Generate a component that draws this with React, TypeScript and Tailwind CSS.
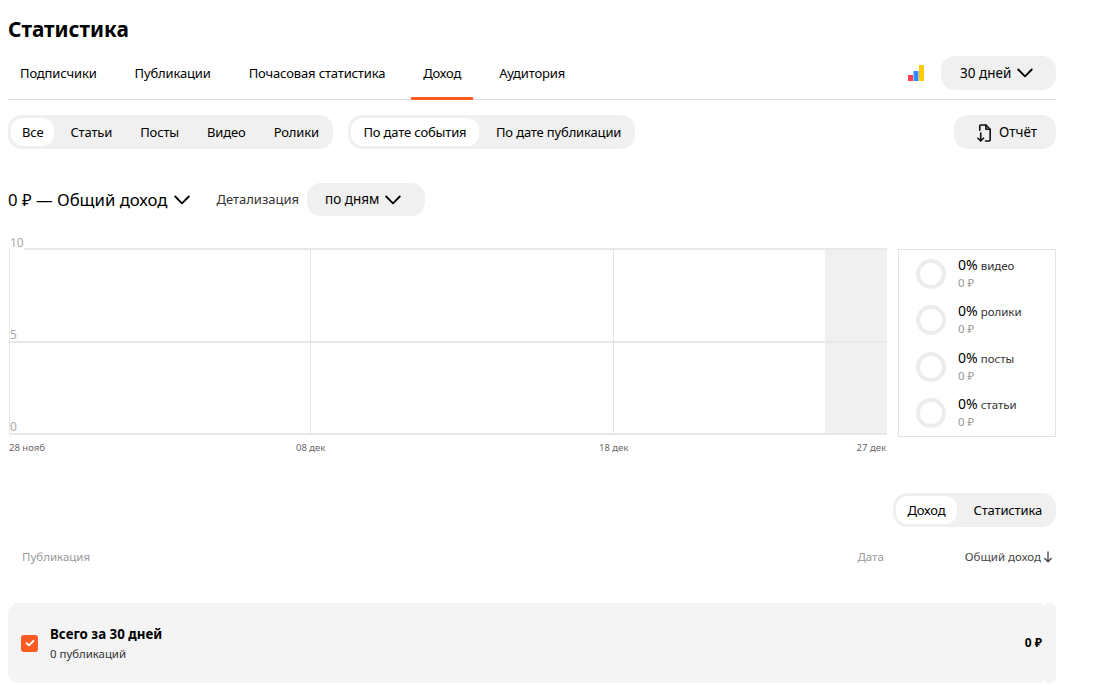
import React from "react";

const tabs = ["Подписчики", "Публикации", "Почасовая статистика", "Доход", "Аудитория"];
const kinds = ["Все", "Статьи", "Посты", "Видео", "Ролики"];
const dateModes = ["По дате события", "По дате публикации"];
const shares = ["видео", "ролики", "посты", "статьи"];

const Chevron = ({ className = "" }: { className?: string }) => (
  <svg viewBox="0 0 16 10" className={className} fill="none" stroke="currentColor" strokeWidth="1.8" strokeLinecap="round" strokeLinejoin="round">
    <path d="M1.2 1.5 8 8.4l6.8-6.9" />
  </svg>
);

const Segment = ({ items, active, pillClass }: { items: string[]; active: string; pillClass: string }) => (
  <div className="flex h-[34px] items-center rounded-[14px] bg-[#f0f0f0] pl-[3px]">
    {items.map((item) =>
      item === active ? (
        <div key={item} className={`flex h-[28px] items-center rounded-[12px] bg-white pt-px text-[13px] tracking-[-0.15px] text-black ${pillClass}`}>
          {item}
        </div>
      ) : (
        <div key={item} className="flex h-[28px] items-center px-[14px] pt-px text-[13px] tracking-[-0.15px] text-black">
          {item}
        </div>
      ),
    )}
  </div>
);

const App = () => {
  return (
    <div className="h-[685px] w-[1108px] overflow-hidden bg-white pl-2 font-['Noto_Sans','Open_Sans',sans-serif] text-black">
      <div className="w-[1048px]">
        {/* Header */}
        <h1 className="h-[56px] pt-[12px] text-[20.8px] leading-[34px] font-bold text-black">Статистика</h1>
        <div className="flex h-[44px] items-start justify-between border-b border-[#e0e0e0]">
          <div className="flex gap-[14px]">
            {tabs.map((tab) => (
              <div
                key={tab}
                className={`flex h-[44px] items-center border-b-[3px] px-3 pb-[5px] text-[13px] tracking-[-0.15px] ${tab === "Доход" ? "border-[#fc5a23]" : "border-transparent"}`}
              >
                {tab}
              </div>
            ))}
          </div>
          <div className="flex items-center">
            <svg viewBox="0 0 16 16" className="mr-[17px] h-4 w-4">
              <rect x="0" y="10" width="5" height="6" fill="#ff4050" />
              <rect x="5.5" y="6" width="5" height="10" fill="#2f8cff" />
              <rect x="11" y="0" width="5" height="16" fill="#ffcc00" />
            </svg>
            <div className="flex h-[34px] w-[115px] items-center gap-[6px] rounded-[14px] bg-[#f0f0f0] pl-[19px] text-[13.5px]">
              30 дней
              <Chevron className="h-[10px] w-4" />
            </div>
          </div>
        </div>

        {/* Filters */}
        <div className="mt-[15px] flex justify-between">
          <div className="flex gap-[15px]">
            <Segment items={kinds} active="Все" pillClass="mr-[2px] px-[11px]" />
            <Segment items={dateModes} active="По дате события" pillClass="mr-[3px] px-[12.5px]" />
          </div>
          <div className="flex h-[34px] w-[102px] items-center gap-[6px] rounded-[14px] bg-[#f0f0f0] pt-px pl-[22px] text-[13.5px]">
            <svg viewBox="0 0 18 20" className="h-5 w-[17px]" fill="none" stroke="#111" strokeWidth="1.7" strokeLinecap="round" strokeLinejoin="round">
              <path d="M4 7V2.5A1 1 0 0 1 5 1.5h5.5L15 6v11.5a1 1 0 0 1-1 1h-4" />
              <path d="M10.5 1.5V6H15" />
              <path d="M5 10v8.5M2 15.5l3 3 3-3" />
            </svg>
            Отчёт
          </div>
        </div>

        {/* Chart controls */}
        <div className="mt-[34px] flex h-[33px] items-center">
          <span className="text-[16.7px]">0 ₽ — Общий доход</span>
          <Chevron className="ml-[7px] h-[10px] w-4" />
          <span className="ml-[26px] text-[13px] text-[#333]">Детализация</span>
          <div className="ml-2 flex h-[33px] w-[118px] items-center gap-[6px] rounded-[14px] bg-[#f0f0f0] pl-[18px] text-[13.5px]">
            по дням
            <Chevron className="h-[10px] w-4" />
          </div>
        </div>

        {/* Chart and share legend */}
        <div className="mt-[33px] flex h-[188px] items-start">
          <div className="relative ml-px h-[187px] w-[878px] -translate-y-px border-t-2 border-b-2 border-l border-[#e8e8e8]">
            <div className="absolute top-0 right-0 bottom-0 w-[62px] bg-[#f0f0f0]" />
            <div className="absolute top-[91px] right-0 left-0 h-0.5 bg-[#e8e8e8]" />
            <div className="absolute top-0 bottom-0 left-[300px] w-px bg-[#e4e4e4]" />
            <div className="absolute top-0 bottom-0 left-[603px] w-px bg-[#e4e4e4]" />
            <span className="absolute top-[-15px] left-0 bg-white text-[12px] leading-[16px] text-[#aaa]">10</span>
            <span className="absolute top-[77px] left-0 text-[12px] leading-[16px] text-[#aaa]">5</span>
            <span className="absolute top-[169px] left-0 text-[12px] leading-[16px] text-[#aaa]">0</span>
            <span className="absolute top-[192px] -left-px text-[9.5px] leading-[12px] whitespace-nowrap text-[#666]">28 нояб</span>
            <span className="absolute top-[192px] left-[286px] text-[9.5px] leading-[12px] whitespace-nowrap text-[#666]">08 дек</span>
            <span className="absolute top-[192px] left-[589px] text-[9.5px] leading-[12px] whitespace-nowrap text-[#666]">18 дек</span>
            <span className="absolute top-[192px] right-[1px] text-[9.5px] leading-[12px] whitespace-nowrap text-[#666]">27 дек</span>
          </div>
          <div className="ml-[11px] flex h-[188px] w-[158px] flex-col justify-between border border-[#e4e4e4] pt-[4px] pb-[3px] pl-[17px]">
            {shares.map((share) => (
              <div key={share} className="flex h-[40px] items-center">
                <div className="h-[30px] w-[30px] rounded-full border-[4px] border-[#ececec]" />
                <div className="-mt-[3px] ml-[12px]">
                  <div className="flex h-[20px] items-baseline">
                    <span className="text-[14px]">0%</span>
                    <span className="ml-[3px] text-[11.5px] text-[#333]">{share}</span>
                  </div>
                  <div className="mt-px text-[11.5px] leading-[16px] text-[#999]">0 ₽</div>
                </div>
              </div>
            ))}
          </div>
        </div>

        {/* Table */}
        <div className="mt-[56px] flex justify-end">
          <Segment items={["Доход", "Статистика"]} active="Доход" pillClass="mr-[3px] px-[11px]" />
        </div>
        <div className="mt-[20px] flex h-[20px] items-center text-[11.5px]">
          <span className="ml-[14px] text-[#999]">Публикация</span>
          <span className="mr-[81px] ml-auto text-[#999]">Дата</span>
          <span className="text-[#444]">Общий доход</span>
          <svg viewBox="0 0 10 12" className="mr-[3px] ml-[2px] h-3 w-[10px]" fill="none" stroke="#444" strokeWidth="1.3" strokeLinecap="round" strokeLinejoin="round">
            <path d="M5 1v9.5M1.8 7.5 5 10.8l3.2-3.3" />
          </svg>
        </div>
        {/* Totals row: the last cell keeps its own rounded corners */}
        <div className="mt-[36px] flex h-[80px]">
          <div className="flex flex-1 items-center justify-between rounded-l-[10px] bg-[#f4f4f4] pl-[13px]">
            <div className="flex items-center">
              <div className="flex h-[17px] w-[17px] items-center justify-center rounded-[3px] bg-[#fc5a23]">
                <svg viewBox="0 0 12 12" className="h-[12px] w-[12px]" fill="none" stroke="#fff" strokeWidth="1.9" strokeLinecap="round" strokeLinejoin="round">
                  <path d="M2.6 6.2 5 8.4l4.4-4.4" />
                </svg>
              </div>
              <div className="mt-px ml-[12px]">
                <div className="text-[13.3px] leading-[20px] font-bold text-black">Всего за 30 дней</div>
                <div className="text-[11.4px] leading-[20px] text-[#333]">0 публикаций</div>
              </div>
            </div>
            <span className="mr-px text-[12px] font-bold text-black">0 ₽</span>
          </div>
          <div className="w-[13px] rounded-[10px] bg-[#f4f4f4]" />
        </div>
      </div>
    </div>
  );
};

export default App;
